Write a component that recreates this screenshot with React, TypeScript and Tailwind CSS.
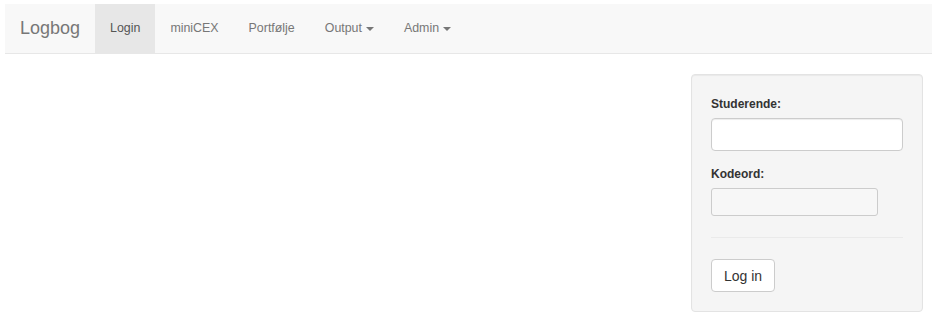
import React from "react";

const Caret = () => (
  <span className="inline-block ml-[4px] align-middle w-0 h-0 border-t-[4px] border-t-[#777] border-x-[4px] border-x-transparent" />
);

export default function App() {
  return (
    <div className="min-h-[324px] bg-white pt-[4px] pl-[5px] font-['Liberation_Sans',Arial,sans-serif] text-[#333]">
      <nav className="h-[50px] bg-[#f8f8f8] border-b border-[#e7e7e7] flex items-stretch">
        <div className="pl-[15px] pr-[15px] flex items-center text-[18px] text-[#777]">Logbog</div>
        <ul className="flex items-stretch text-[12.4px] text-[#777]">
          <li className="px-[15px] flex items-center bg-[#e7e7e7] text-[#555]">Login</li>
          <li className="px-[15px] flex items-center">miniCEX</li>
          <li className="px-[15px] flex items-center">Portfølje</li>
          <li className="px-[15px] flex items-center">
            Output
            <Caret />
          </li>
          <li className="px-[15px] flex items-center">
            Admin
            <Caret />
          </li>
        </ul>
      </nav>
      <div className="flex justify-end pr-[9px] mt-[20px]">
        <div className="w-[232px] bg-[#f5f5f5] border border-[#e3e3e3] rounded-[4px] shadow-[inset_0_1px_1px_rgba(0,0,0,0.05)] px-[19px] pt-[19px] pb-[19px]">
          <label className="block text-[12px] font-bold leading-[17px] text-[#333] mt-[2px] mb-[5px]">Studerende:</label>
          <input
            type="text"
            className="block w-[192px] h-[33px] bg-white border border-[#ccc] rounded-[4px] shadow-[inset_0_1px_1px_rgba(0,0,0,0.075)] outline-none"
          />
          <label className="block text-[12px] font-bold leading-[17px] text-[#333] mt-[15px] mb-[5px]">Kodeord:</label>
          <input
            type="password"
            className="block w-[167px] h-[28px] bg-[#f7f7f7] border border-[#ccc] rounded-[3px] outline-none"
          />
          <hr className="mt-[21px] mb-[21px] border-0 border-t border-[#eaeaea] w-[192px]" />
          <button className="block h-[33px] px-[12px] bg-white border border-[#ccc] rounded-[4px] text-[14px] leading-[20px] text-[#333]">
            Log in
          </button>
        </div>
      </div>
    </div>
  );
}
